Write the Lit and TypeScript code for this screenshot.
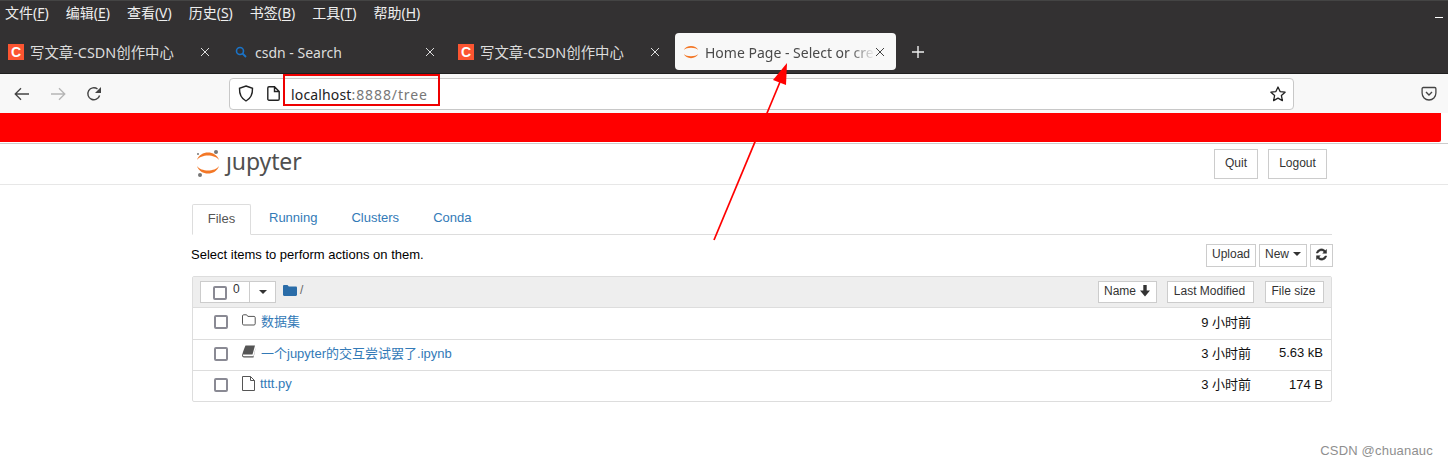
import { LitElement, html, css, svg } from "lit";
import { customElement } from "lit/decorators.js";

const csdn = html`<span class="csdn">C</span>`;
const x = html`<svg class="close" width="10" height="10" viewBox="0 0 10 10"><path d="M1 1l8 8M9 1l-8 8" stroke="currentColor" stroke-width="1" fill="none"/></svg>`;
const favRing = svg`<svg width="16" height="16" viewBox="0 0 16 16"><path d="M.8 6C3 .5 13 .5 15.200 6 12.500 3 3.500 3 .8 6ZM.8 10C3 15.500 13 15.500 15.200 10 12.500 13 3.500 13 .8 10Z" fill="#f37726"/></svg>`;
const logoRing = svg`<svg width="22" height="28" viewBox="0 0 22 28"><path d="M0 10C3 0 19 0 22 10 18 4 4 4 0 10ZM0 16C3 26 19 26 22 16 18 22 4 22 0 16Z" fill="#f37726"/></svg>`;

const menus: [string, string][] = [["文件", "F"], ["编辑", "E"], ["查看", "V"], ["历史", "S"], ["书签", "B"], ["工具", "T"], ["帮助", "H"]];

const folderIcon = html`<svg width="14" height="12" viewBox="0 0 14 12"><path d="M.5 2C.5 1.200 1 .8 1.600.8h3l1.200 1.600h6.200c.7 0 1.200.5 1.200 1.100v6.300c0 .7-.5 1.200-1.200 1.200H1.700C1 11 .5 10.500.5 9.800Z" fill="none" stroke="#555"/></svg>`;
const bookIcon = html`<svg width="14" height="13" viewBox="0 0 14 13"><path d="M3.500.500h9.500l-2.500 9H1.200C1 9.500 1 10 1 10.300c0 .6.400 1 1 1h9.500l2-8v.5l-2 8.700H2c-1.200 0-2-.9-1.900-2.200C.2 9.300 2.500 2.500 3.500.500Z" fill="#555"/></svg>`;
const fileIcon = html`<svg width="13" height="15" viewBox="0 0 13 15"><path d="M.5.500h8l4 4v10H.5ZM8.500.500v4h4" fill="none" stroke="#555"/></svg>`;

@customElement("app-root")
export class AppRoot extends LitElement {
  static styles = css`
    :host { display: block; position: relative; width: 1448px; height: 465px; overflow: hidden; background: #fff;
      font-family: "Liberation Sans", "Noto Sans CJK SC", sans-serif; font-size: 13px; color: #000; }
    a { color: #337ab7; text-decoration: none; }
    .chrome { height: 74px; box-sizing: border-box; background: #333132; border-top: 1px solid #444; border-bottom: 1px solid #1f1f1f; color: #eee;
      font-family: "Noto Sans", "Noto Sans CJK SC", sans-serif; display: flex; flex-direction: column; position: relative; }
    .menu { display: flex; gap: 17px; height: 32px; padding: 0 0 0 5px; align-items: flex-start; font-size: 14px; line-height: 24px; }
    .menu u { text-underline-offset: 2px; }
    .min { position: absolute; right: 5px; top: 16px; width: 8px; height: 1px; background: #fff; }
    .tabs { display: flex; height: 37px; align-items: stretch; }
    .tab { width: 225px; box-sizing: border-box; display: flex; align-items: center; padding: 0 15px 0 8px; font-size: 14px; color: #ddd; }
    .tab .fav { width: 16px; height: 16px; flex: none; margin-right: 6px; display: flex; align-items: center; justify-content: center; }
    .tab .title { flex: 1; white-space: nowrap; min-width: 0; }
    .tab .title.cjk { font-size: 14.400px; }
    .tab .title.latin { margin-top: 2px; }
    .tab .close { flex: none; color: #ddd; margin-left: 8px; }
    .tab.active { width: 221px; background: #f8f8f8; border-radius: 4px; color: #4a4a4a; padding-right: 11px; }
    .tab.active .title { -webkit-mask-image: linear-gradient(90deg, #000 85%, transparent); mask-image: linear-gradient(90deg, #000 85%, transparent); }
    .tab.active .close { color: #444; margin-left: 0; }
    .csdn { display: block; width: 16px; height: 16px; background: #fc5531; color: #fff; font: bold 14px/16px "Liberation Sans", sans-serif; text-align: center; }
    .plus { display: flex; align-items: center; margin-left: 16px; }
    .toolbar { height: 39px; box-sizing: border-box; background: #f8f8f8; display: flex; align-items: center; padding: 0 11px 0 14px; }
    .nav { display: flex; gap: 20px; width: 96px; margin-right: 119px; align-items: center; }
    .url { flex: none; width: 1065px; height: 32px; box-sizing: border-box; background: #fff; border: 1px solid #c8c8c8; border-radius: 4px; display: flex; align-items: center;
      padding: 0 7px 0 8px; font-family: "Noto Sans", sans-serif; font-size: 14px; color: #777; margin-right: 127px; }
    .url svg { flex: none; }
    .url .shield { margin-right: 13px; }
    .url .doc { margin-right: 11px; }
    .url .path { flex: 1; letter-spacing: .9px; margin-top: 2px; }
    .url b { font-weight: 400; color: #222; letter-spacing: .15px; }
    .band { height: 30px; box-sizing: border-box; display: flex; }
    .red { width: 1441px; height: 29px; background: #f00; border-radius: 0 0 2px 0; }
    .page-head { height: 42px; box-sizing: border-box; border-top: 1px solid #ccc; border-bottom: 1px solid #e7e7e7; display: flex; align-items: flex-start; padding: 5px 121px 0 197px; }
    .logo { display: flex; align-items: center; gap: 7px; flex: 1; height: 30px; color: #505050; font-family: "Noto Sans", sans-serif; font-size: 23px; line-height: 30px; letter-spacing: -.1px; }
    .logo-word { margin-top: -7px; }
    .logo-mark { position: relative; width: 22px; height: 28px; display: flex; align-items: center; }
    .dot { position: absolute; border-radius: 50%; background: #777; }
    .d1 { left: 17px; top: 0; width: 4px; height: 4px; }
    .d2 { left: 0; top: 3px; width: 2px; height: 2px; }
    .d3 { left: 1px; top: 23px; width: 4px; height: 4px; }
    .btn { box-sizing: border-box; display: inline-flex; align-items: center; justify-content: center; background: #fff; border: 1px solid #ccc; color: #333; font-size: 12px; white-space: nowrap; }
    .head-btn { height: 30px; padding-bottom: 3px; }
    .quit { width: 44px; margin-right: 10px; }
    .logout { width: 59px; }
    .container { margin-left: 192px; width: 1141px; }
    .tabsbar { margin-top: 19px; height: 31px; box-sizing: border-box; display: flex; border-bottom: 1px solid #ddd; font-size: 13px; width: 1140px; }
    .tabsbar > * { height: 30px; line-height: 28px; padding: 0 16px; margin-right: 2px; box-sizing: border-box; }
    .tabsbar .on { width: 59px; padding: 0; margin-right: 2px; line-height: 27px; text-align: center; color: #555; background: #fff; border: 1px solid #ddd; border-bottom: 1px solid #fff; height: 31px; border-radius: 2px 2px 0 0; }
    .actions { height: 41px; display: flex; align-items: center; justify-content: space-between; font-size: 13px; box-sizing: border-box; }
    .actions .info { margin-left: -1px; margin-top: -2px; }
    .act-r { display: flex; gap: 3px; margin-top: -1px; }
    .act-r .btn { height: 23px; padding-bottom: 2px; }
    .upload { width: 50px; } .newb { width: 48px; gap: 4px; } .refresh { width: 23px; }
    .caret { width: 0; height: 0; border: 4px solid transparent; border-top-color: #333; border-bottom: 0; display: inline-block; }
    .list { width: 1140px; box-sizing: border-box; border: 1px solid #ddd; border-radius: 2px; }
    .lhead { background: #eee; border-bottom: 1px solid #ddd; display: flex; align-items: center; padding: 0 7px; box-sizing: border-box; height: 31px; }
    .selbox { display: flex; width: 76px; height: 22px; box-sizing: border-box; border: 1px solid #ccc; background: #fff; color: #333; font-size: 12px; }
    .selbox .l { width: 49px; box-sizing: border-box; display: flex; padding-left: 12px; gap: 6px; align-items: center; border-right: 1px solid #ccc; line-height: 14px; }
    .selbox .l .num { margin-top: -6px; }
    .selbox .l .cb { margin-top: 2px; }
    .selbox .r { flex: 1; display: flex; align-items: center; justify-content: center; }
    .cb { width: 14px; height: 14px; box-sizing: border-box; border: 2px solid #8a8a94; border-radius: 2px; background: #fff; flex: none; }
    .crumb { display: flex; align-items: center; gap: 3px; margin-left: 7px; flex: 1; color: #666; font-size: 12px; margin-top: -4px; }
    .sort { height: 22px; font-size: 12px; padding-bottom: 3px; }
    .sn { width: 59px; margin-right: 10px; gap: 3px; } .sm { width: 87px; margin-right: 11px; padding-right: 2px; } .ss { width: 59px; padding-right: 2px; }
    .row { display: flex; align-items: center; padding: 0 8px 2px 21px; box-sizing: border-box; height: 31.500px; border-bottom: 1px solid #ddd; font-size: 13px; }
    .row:last-child { border-bottom: 0; height: 30px; }
    .ic { width: 14px; margin: -4px 5px 0 14px; display: flex; flex: none; }
    .name { flex: 1; margin-top: -3px; }
    .row:last-child .name { margin-left: -1px; }
    .time { width: 120px; text-align: right; color: #111; margin-top: -2px; }
    .size { width: 72px; text-align: right; color: #111; margin-top: -2px; }
    .row:last-child .time { margin-top: -4px; }
    .ov { position: absolute; left: 0; top: 0; pointer-events: none; }
    .mark-box { position: absolute; left: 283px; top: 74px; width: 157px; height: 32px; box-sizing: border-box; border: 2px solid #e00; }
    .wm { position: absolute; right: 15px; bottom: 7px; font-size: 13px; color: #8f8f8f; letter-spacing: .2px; }
  `;

  render() {
    return html`
      <div class="chrome">
        <div class="menu">${menus.map(([a, k]) => html`<span>${a}(<u>${k}</u>)</span>`)}</div>
        <span class="min"></span>
        <div class="tabs">
          <div class="tab"><span class="fav">${csdn}</span><span class="title cjk">写文章-CSDN创作中心</span>${x}</div>
          <div class="tab">
            <span class="fav"><svg width="14" height="14" viewBox="0 0 14 14"><circle cx="6" cy="6" r="3.500" fill="none" stroke="#1a73c8" stroke-width="1.600"/><path d="M8.500 8.500l3.500 3.500" stroke="#1a73c8" stroke-width="1.800"/></svg></span>
            <span class="title latin">csdn - Search</span>${x}
          </div>
          <div class="tab"><span class="fav">${csdn}</span><span class="title cjk">写文章-CSDN创作中心</span>${x}</div>
          <div class="tab active"><span class="fav">${favRing}</span><span class="title latin">Home Page - Select or cre</span>${x}</div>
          <div class="plus"><svg width="12" height="12" viewBox="0 0 12 12"><path d="M6 0v12M0 6h12" stroke="#eee" stroke-width="1.400"/></svg></div>
        </div>
      </div>
      <div class="toolbar">
        <div class="nav">
          <svg width="16" height="14" viewBox="0 0 16 14"><path d="M15 7H1.500M7 1.200L1.200 7 7 12.800" fill="none" stroke="#444" stroke-width="1.300"/></svg>
          <svg width="16" height="14" viewBox="0 0 16 14"><path d="M1 7h13.500M9 1.200L14.800 7 9 12.800" fill="none" stroke="#b5b5b5" stroke-width="1.300"/></svg>
          <svg width="16" height="16" viewBox="0 0 16 16"><path d="M13.600 9.500A6 6 0 1 1 11.500 3" fill="none" stroke="#444" stroke-width="1.400"/><path d="M15 1v6H9Z" fill="#444"/></svg>
        </div>
        <div class="url">
          <svg class="shield" width="16" height="17" viewBox="0 0 16 17"><path d="M8 1l6.500 2.300c.2 5.700-1.600 10.200-6.500 12.700C3.100 13.500 1.300 9 1.500 3.300Z" fill="none" stroke="#222" stroke-width="1.400"/></svg>
          <svg class="doc" width="13" height="15" viewBox="0 0 13 15"><path d="M2 .800h5.500l4.700 4.700v7.500c0 .7-.5 1.200-1.200 1.200H2c-.7 0-1.200-.5-1.200-1.200V2C.8 1.300 1.300.800 2 .800ZM7.500 1v4.500h4.500" fill="none" stroke="#222" stroke-width="1.400"/></svg>
          <span class="path"><b>localhost</b>:8888/tree</span>
          <svg width="16" height="16" viewBox="0 0 16 16"><path d="M8 1l2.100 4.600 5 .6-3.700 3.400 1 5L8 12.100 3.600 14.600l1-5L.9 6.200l5-.6Z" fill="none" stroke="#222" stroke-width="1.300" stroke-linejoin="round"/></svg>
        </div>
        <svg width="16" height="16" viewBox="0 0 16 16"><path d="M2.300 1.500h11.400c.7 0 1.200.5 1.200 1.200V7c0 4-3 7-6.900 7S1.100 11 1.100 7V2.700c0-.7.5-1.200 1.200-1.200Z" fill="none" stroke="#444" stroke-width="1.300"/><path d="M5 6l3 3 3-3" fill="none" stroke="#444" stroke-width="1.400"/></svg>
      </div>
      <div class="band"><div class="red"></div></div>
      <div class="page-head">
        <div class="logo">
          <span class="logo-mark">${logoRing}
            <i class="dot d1"></i><i class="dot d2"></i><i class="dot d3"></i>
          </span>
          <span class="logo-word">ȷupyter</span>
        </div>
        <span class="btn head-btn quit">Quit</span>
        <span class="btn head-btn logout">Logout</span>
      </div>
      <div class="container">
        <div class="tabsbar"><span class="on">Files</span><a>Running</a><a>Clusters</a><a>Conda</a></div>
        <div class="actions">
          <span class="info">Select items to perform actions on them.</span>
          <div class="act-r">
            <span class="btn upload">Upload</span>
            <span class="btn newb">New <i class="caret"></i></span>
            <span class="btn refresh"><svg width="13" height="13" viewBox="0 0 13 13"><path d="M11.500 1.500v3.800H7.700l1.400-1.400A3.600 3.600 0 0 0 3 5H1.200A5.400 5.400 0 0 1 10.300 2.500ZM1.500 11.500V7.700h3.800L3.900 9.100A3.600 3.600 0 0 0 10 8h1.800a5.400 5.400 0 0 1-9.100 2.500Z" fill="#333" stroke="#333" stroke-width=".5"/></svg></span>
          </div>
        </div>
        <div class="list">
          <div class="lhead">
            <div class="selbox"><div class="l"><span class="cb"></span><span class="num">0</span></div><div class="r"><i class="caret"></i></div></div>
            <div class="crumb"><svg width="14" height="11" viewBox="0 0 14 11"><path d="M0 1.200C0 .5.500 0 1.200 0h3.300l1.300 1.500h7c.7 0 1.200.5 1.200 1.200v7c0 .7-.5 1.200-1.200 1.200H1.200C.5 10.900 0 10.400 0 9.700Z" fill="#2a6ca8"/></svg><span>/</span></div>
            <span class="btn sort sn">Name <svg width="12" height="12" viewBox="0 0 12 12"><path d="M4.300 0h3.400v5.500H11L6 11.500 1 5.500h3.300Z" fill="#333"/></svg></span>
            <span class="btn sort sm">Last Modified</span>
            <span class="btn sort ss">File size</span>
          </div>
          <div class="row"><span class="cb"></span><span class="ic">${folderIcon}</span><a class="name">数据集</a><span class="time">9 小时前</span><span class="size"></span></div>
          <div class="row"><span class="cb"></span><span class="ic">${bookIcon}</span><a class="name">一个jupyter的交互尝试罢了.ipynb</a><span class="time">3 小时前</span><span class="size">5.63 kB</span></div>
          <div class="row"><span class="cb"></span><span class="ic">${fileIcon}</span><a class="name">tttt.py</a><span class="time">3 小时前</span><span class="size">174 B</span></div>
        </div>
      </div>
      <span class="wm">CSDN @chuanauc</span>
      <div class="mark-box"></div>
      <svg class="ov" width="1448" height="465" viewBox="0 0 1448 465">
        <path d="M714 240L780 82" stroke="#f00" stroke-width="1.700" fill="none"/>
        <path d="M787 63L773 80L786 85Z" fill="#f00"/>
      </svg>
    `;
  }
}
